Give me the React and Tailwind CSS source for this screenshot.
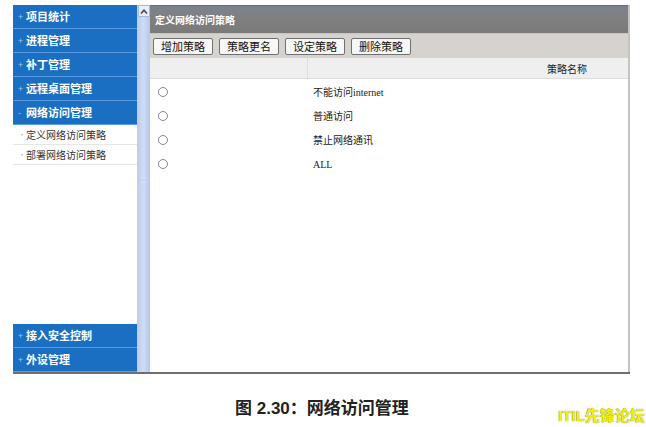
const navTop = ["项目统计", "进程管理", "补丁管理", "远程桌面管理"];
const subItems = ["定义网络访问策略", "部署网络访问策略"];
const buttons = ["增加策略", "策略更名", "设定策略", "删除策略"];
const rows = ["不能访问internet", "普通访问", "禁止网络通讯", "ALL"];

const cjk = { fontFamily: '"Noto Sans CJK SC", sans-serif' };

function NavItem({ label, open }) {
  return (
    <div className="h-[24px] flex items-center pl-[5px] bg-[#1b6fc2] border-b border-[#5b9be0] text-white text-[11px] font-bold">
      <span className="text-[9px] text-[#9cc6f2] w-[8px] font-normal">{open ? "-" : "+"}</span>
      <span>{label}</span>
    </div>
  );
}

export default function App() {
  return (
    <div className="w-[646px] h-[427px] bg-white overflow-hidden" style={cjk}>
      <div className="ml-[13px] mt-[5px] w-[617px] h-[369px] flex border-b-2 border-[#6e6e6e]">
        <aside className="w-[124px] flex flex-col">
          {navTop.map((t) => (
            <NavItem key={t} label={t} />
          ))}
          <NavItem label="网络访问管理" open />
          {subItems.map((t) => (
            <div key={t} className="h-[20px] flex items-center pl-[5px] border-b border-[#e6e6e6] text-[10px] text-[#333]">
              <span className="text-[#bbb] w-[8px] text-[8px]">•</span>
              {t}
            </div>
          ))}
          <div className="flex-1 bg-white" />
          <NavItem label="接入安全控制" />
          <NavItem label="外设管理" />
        </aside>

        <div className="w-[13px] bg-gradient-to-r from-[#bccbeb] via-[#cfdcf5] to-[#b7c7e8] flex flex-col items-center">
          <div className="w-[12px] h-[12px] bg-[#e9eef8] border border-[#a9b9da] flex items-center justify-center">
            <svg width="8" height="5" viewBox="0 0 8 5">
              <path d="M1 4.5 L4 1.2 L7 4.5" fill="none" stroke="#3a4a6a" strokeWidth="1.6" />
            </svg>
          </div>
          <div className="flex-1 flex items-center">
            <div className="w-[5px] h-[6px] border-y border-[#d8e2f6] mt-[-30px]" />
          </div>
        </div>

        <main className="flex-1 flex flex-col border-r-2 border-[#c4c4c4]">
          <div className="h-[28px] bg-gradient-to-b from-[#7d8290] via-[#7f7f7f] to-[#7a7a7a] border-t border-[#4f6fa8] flex items-center pl-[5px] text-white text-[10px] font-bold">
            定义网络访问策略
          </div>
          <div className="h-[25px] bg-[#d6d3ce] border-t border-[#c9c6c2] flex items-center gap-[6px] pl-[3px]">
            {buttons.map((b) => (
              <button
                key={b}
                className="h-[17px] w-[60px] bg-[#f7f7f7] border border-[#707070] rounded-[2px] text-[11px] text-[#111] leading-none flex items-center justify-center"
              >
                {b}
              </button>
            ))}
          </div>
          <div className="h-[21px] bg-[#efefef] border-b border-[#dcdcdc] flex text-[10px] text-[#222]">
            <div className="w-[158px] border-r border-[#dedede]" />
            <div className="flex-1 flex items-center justify-end pr-[41px]">策略名称</div>
          </div>
          <div className="pt-[1px]">
            {rows.map((r) => (
              <div key={r} className="h-[24px] flex items-center text-[10px] text-[#222]">
                <div className="w-[163px] pl-[8px]">
                  <div className="w-[10px] h-[10px] rounded-full border border-[#888] bg-white" />
                </div>
                <span style={{ fontFamily: '"Liberation Serif", "Noto Sans CJK SC", serif' }}>{r}</span>
              </div>
            ))}
          </div>
        </main>
      </div>

      <div className="relative h-[53px]">
        <div className="absolute left-[235px] top-[22px] text-[17px] font-bold text-[#222]" style={{ fontFamily: '"Liberation Sans", "Noto Sans CJK SC", sans-serif' }}>
          图 2.30：网络访问管理
        </div>
        <div
          className="absolute left-[558px] top-[31px] text-[15px] font-bold text-[#f2f200] [text-shadow:0_0_1px_#555]"
          style={{ fontFamily: '"Liberation Sans", "Noto Sans CJK SC", sans-serif' }}
        >
          ITIL先锋论坛
        </div>
      </div>
    </div>
  );
}
